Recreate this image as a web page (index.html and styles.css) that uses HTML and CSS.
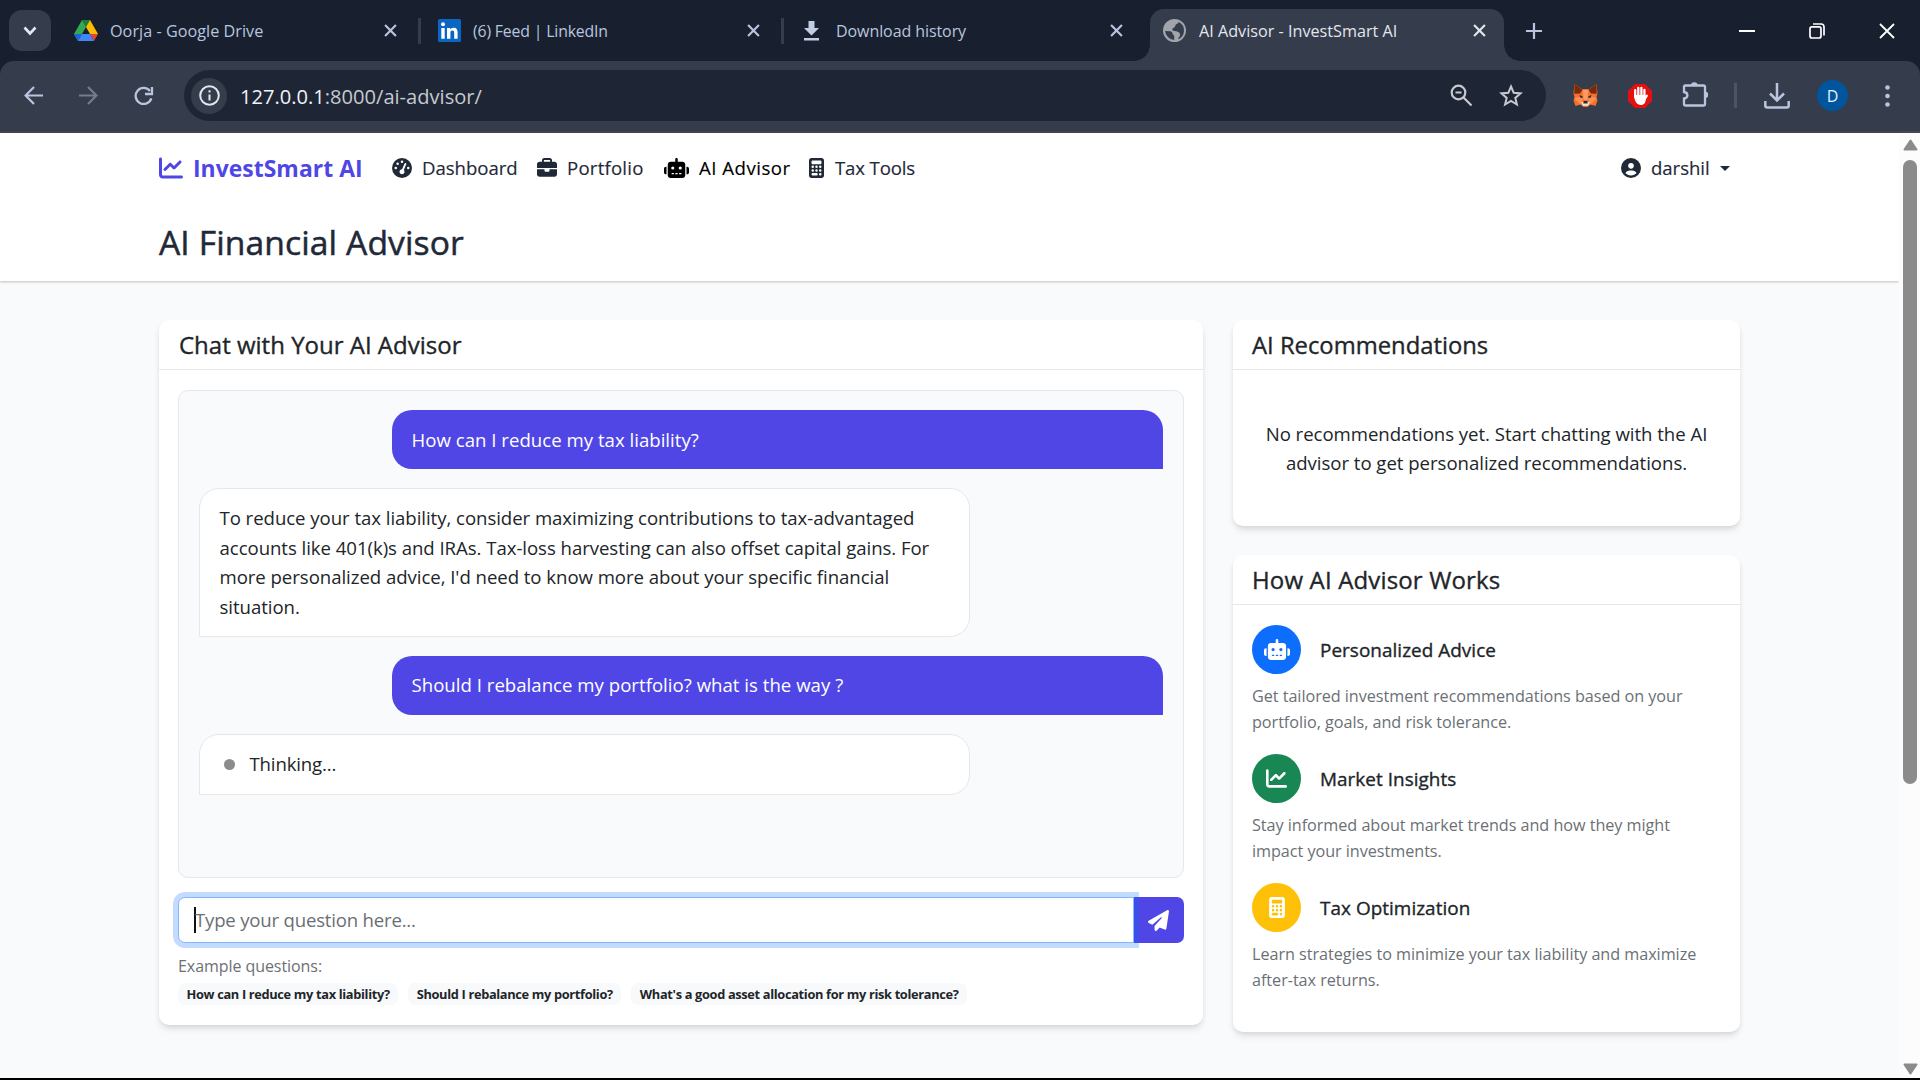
FILE: index.html
```html
<!DOCTYPE html>
<html lang="en">
<head>
<meta charset="utf-8">
<title>AI Advisor - InvestSmart AI</title>
<link rel="stylesheet" href="styles.css">
</head>
<body>
<svg class="defs" width="0" height="0" aria-hidden="true">
  <symbol id="chart-line" viewBox="0 0 512 512"><path d="M64 64c0-17.7-14.3-32-32-32S0 46.3 0 64V400c0 44.2 35.8 80 80 80H480c17.7 0 32-14.3 32-32s-14.3-32-32-32H80c-8.8 0-16-7.2-16-16V64zm406.6 86.6c12.5-12.5 12.5-32.8 0-45.3s-32.8-12.5-45.3 0L320 210.7l-57.4-57.4c-12.5-12.5-32.8-12.5-45.3 0l-112 112c-12.5 12.5-12.5 32.8 0 45.3s32.8 12.5 45.3 0L240 221.3l57.4 57.4c12.5 12.5 32.8 12.5 45.3 0l128-128z"/></symbol>
  <symbol id="gauge" viewBox="0 0 512 512"><path fill-rule="evenodd" d="M0 256a256 256 0 1 1 512 0A256 256 0 1 1 0 256zM288 96a32 32 0 1 0-64 0 32 32 0 1 0 64 0zM256 416c35.3 0 64-28.7 64-64 0-17.4-6.9-33.1-18.1-44.6L366 161.7c5.3-12.1-.2-26.3-12.3-31.6s-26.3 .2-31.6 12.3L257.9 288c-.6 0-1.3 0-1.9 0-35.3 0-64 28.7-64 64s28.7 64 64 64zM176 144a32 32 0 1 0-64 0 32 32 0 1 0 64 0zM96 288a32 32 0 1 0 0-64 32 32 0 1 0 0 64zM448 256a32 32 0 1 0-64 0 32 32 0 1 0 64 0z"/></symbol>
  <symbol id="briefcase" viewBox="0 0 512 512"><path d="M184 48H328c4.4 0 8 3.6 8 8V96H176V56c0-4.4 3.6-8 8-8zm-56 8V96H64C28.7 96 0 124.7 0 160v96H192 320 512V160c0-35.3-28.7-64-64-64H384V56c0-30.9-25.1-56-56-56H184c-30.9 0-56 25.1-56 56zM512 288H320v32c0 17.7-14.3 32-32 32H224c-17.7 0-32-14.3-32-32V288H0V416c0 35.3 28.7 64 64 64H448c35.3 0 64-28.7 64-64V288z"/></symbol>
  <symbol id="robot" viewBox="0 0 640 512"><path d="M320 0c17.7 0 32 14.3 32 32V96H472c39.8 0 72 32.2 72 72V440c0 39.8-32.2 72-72 72H168c-39.8 0-72-32.2-72-72V168c0-39.8 32.2-72 72-72H288V32c0-17.7 14.3-32 32-32zM208 384c-8.8 0-16 7.2-16 16s7.2 16 16 16h32c8.8 0 16-7.2 16-16s-7.2-16-16-16H208zm96 0c-8.8 0-16 7.2-16 16s7.2 16 16 16h32c8.8 0 16-7.2 16-16s-7.2-16-16-16H304zm96 0c-8.8 0-16 7.2-16 16s7.2 16 16 16h32c8.8 0 16-7.2 16-16s-7.2-16-16-16H400zM264 256a40 40 0 1 0-80 0 40 40 0 1 0 80 0zm152 40a40 40 0 1 0 0-80 40 40 0 1 0 0 80zM48 224H64V416H48c-26.5 0-48-21.5-48-48V272c0-26.5 21.5-48 48-48zm544 0c26.5 0 48 21.5 48 48v96c0 26.5-21.5 48-48 48H576V224h16z"/></symbol>
  <symbol id="calculator" viewBox="0 0 384 512"><path d="M64 0C28.7 0 0 28.7 0 64V448c0 35.3 28.7 64 64 64H320c35.3 0 64-28.7 64-64V64c0-35.3-28.7-64-64-64H64zM96 64H288c17.7 0 32 14.3 32 32v32c0 17.7-14.3 32-32 32H96c-17.7 0-32-14.3-32-32V96c0-17.7 14.3-32 32-32zm32 160a32 32 0 1 1-64 0 32 32 0 1 1 64 0zM96 352a32 32 0 1 1 0-64 32 32 0 1 1 0 64zM64 416c0-17.7 14.3-32 32-32h96c17.7 0 32 14.3 32 32s-14.3 32-32 32H96c-17.7 0-32-14.3-32-32zM192 256a32 32 0 1 1 0-64 32 32 0 1 1 0 64zm32 64a32 32 0 1 1-64 0 32 32 0 1 1 64 0zm64-64a32 32 0 1 1 0-64 32 32 0 1 1 0 64zm32 64a32 32 0 1 1-64 0 32 32 0 1 1 64 0zM288 448a32 32 0 1 1 0-64 32 32 0 1 1 0 64z"/></symbol>
  <symbol id="close" viewBox="0 0 12 12"><path d="M1 1l10 10M11 1L1 11" fill="none" stroke="currentColor" stroke-width="2"/></symbol>
</svg>

<div class="browser">
  <div class="tabstrip">
    <div class="tab-search"><svg width="14" height="10" viewBox="0 0 14 10"><path d="M1.5 1.5L7 7.5l5.5-6" fill="none" stroke="#e3e8f2" stroke-width="2.6"/></svg></div>
    <div class="tab tab-drive">
      <svg class="fav" width="24" height="22" viewBox="0 0 24 22"><path d="M8 0h8l-4 7z" fill="#188038"/><path d="M8 0l4 7-8 14L0 14z" fill="#34a853"/><path d="M16 0l8 14h-8L12 7z" fill="#fbbc04"/><path d="M16 14h8l-4 7z" fill="#ea4335"/><path d="M8 14h8l4 7H4z" fill="#4285f4"/><path d="M0 14h8l-4 7z" fill="#1967d2"/></svg>
      <span class="t-drive">Oorja - Google Drive</span><svg class="x" width="13" height="13"><use href="#close"/></svg>
    </div>
    <div class="tab tab-linked">
      <svg class="fav" width="23" height="23" viewBox="0 0 23 23"><rect width="23" height="23" rx="1.5" fill="#0a66c2"/><circle cx="5" cy="5.3" r="2" fill="#fff"/><path d="M3.3 9h3.4v10.7H3.3zM9 9h3.2v1.5c.6-1.1 1.8-1.8 3.4-1.8 3.2 0 4 2.1 4 5v6h-3.4v-5.4c0-1.4-.2-2.7-1.8-2.7s-2 1.2-2 2.6v5.5H9z" fill="#fff"/></svg>
      <span class="t-linked">(6) Feed | LinkedIn</span><svg class="x" width="13" height="13"><use href="#close"/></svg>
    </div>
    <div class="tab tab-down">
      <svg class="fav" width="15" height="20" viewBox="0 0 15 20"><path d="M4.5 0h6v7H15l-7.5 7.5L0 7h4.5zM0 17h15v2.4H0z" fill="#c2cde4"/></svg>
      <span class="t-down">Download history</span><svg class="x" width="13" height="13"><use href="#close"/></svg>
    </div>
    <div class="tab tab-active">
      <svg class="fav" width="23" height="23" viewBox="0 0 24 24"><path fill="#a1a5ab" d="M12 0a12 12 0 1 0 0 24 12 12 0 0 0 0-24zM2.200 12.600l5 .2c2 .1 2.600 1.200 2.800 2.700.1 1.200 1.500 1 1.700 2.200.2 1.300-.5 2.600.3 4.100A9.800 9.800 0 0 1 2.200 12.600zm13.500 8.500c.2-2.500 2-2.400 2.200-4.500.2-2.300-1.900-3.200-4.200-3.700-2.200-.5-4-.6-4-2.200s1.800-1.300 2.700-2.600c.8-1.200.2-2.300 1.800-2.900 1-.4 1.900-.9 1.900-2.100a9.800 9.800 0 0 1 5.800 9.400 9.700 9.700 0 0 1-6.200 8.600z" fill-rule="evenodd"/></svg>
      <span class="t-active">AI Advisor - InvestSmart AI</span><svg class="x" width="13" height="13"><use href="#close"/></svg>
    </div>
    <svg class="newtab" width="16" height="16" viewBox="0 0 16 16"><path d="M8 0v16M0 8h16" stroke="#b9c5de" stroke-width="2.2"/></svg>
    <div class="winctl">
      <svg width="16" height="16" viewBox="0 0 16 16"><path d="M0 8h16" stroke="#fff" stroke-width="2"/></svg>
      <svg width="16" height="16" viewBox="0 0 16 16"><rect x="1" y="3.8" width="11" height="11.2" rx="2" fill="none" stroke="#fff" stroke-width="1.7"/><path d="M4 1h8a3 3 0 0 1 3 3v8.5" fill="none" stroke="#fff" stroke-width="1.7"/></svg>
      <svg width="16" height="16" viewBox="0 0 16 16"><path d="M1 1l14 14M15 1L1 15" stroke="#fff" stroke-width="1.8"/></svg>
    </div>
  </div>
  <div class="toolbar">
    <svg class="back" width="19" height="19" viewBox="0 0 19 19"><path d="M19 9.5H2M10 1L1.6 9.5 10 18" fill="none" stroke="#b9c5de" stroke-width="2.2"/></svg>
    <svg class="forward" width="19" height="19" viewBox="0 0 19 19"><path d="M0 9.5h17M9 1l8.4 8.5L9 18" fill="none" stroke="#757c8b" stroke-width="2.2"/></svg>
    <svg class="reload" width="20" height="20" viewBox="0 0 20 20"><path d="M17.3 12.3A8 8 0 1 1 16 5" fill="none" stroke="#b9c5de" stroke-width="2.3"/><path d="M18 1v7h-7" fill="none" stroke="#b9c5de" stroke-width="2.3"/></svg>
    <div class="omnibox">
      <div class="info"><svg width="21" height="21" viewBox="0 0 21 21"><circle cx="10.5" cy="10.5" r="9.3" fill="none" stroke="#e3e6ec" stroke-width="2"/><path d="M10.5 9.500v6M10.5 5.300v2.200" stroke="#e3e6ec" stroke-width="2"/></svg></div>
      <span class="url"><b>127.0.0.1</b>:8000/ai-advisor/</span>
      <svg class="zoomout" width="23" height="23" viewBox="0 0 23 23"><circle cx="8.5" cy="8.5" r="6.8" fill="none" stroke="#c7c9ce" stroke-width="2.2"/><path d="M13.5 13.5l8 8M5.5 8.5h6" stroke="#c7c9ce" stroke-width="2.2"/></svg>
      <svg class="star" width="24" height="23" viewBox="0 0 24 23"><path d="M12 2.5l2.7 6.3 6.8.6-5.2 4.5 1.6 6.6L12 17l-5.900 3.500 1.600-6.600-5.200-4.500 6.800-.6z" fill="none" stroke="#c7c9ce" stroke-width="2"/></svg>
    </div>
    <svg class="fox" width="25" height="23" viewBox="0 0 25 23"><path d="M1.5 0l8 5.500h6l8-5.500 1 9-1 4.500 1 3-2 5.500-5-1.500-3 2.500h-4L7.500 20.500l-5 1.500-2-5.500 1-3-1-4.500z" fill="#f5702b"/><path d="M1.500 0l8 5.800L7 9.500l-5.700.3zM23.500 0l-8 5.800L18 9.500l5.700.3z" fill="#7a2a0c"/><path d="M9.500 5.500h6L14.300 16h-3.600z" fill="#ff9a62"/><path d="M1 14l6-1.500 3 3-2.500 5zM24 14l-6-1.500-3 3 2.500 5z" fill="#ff8d52"/><path d="M6.500 11l3.500 1.500-1 1.500-2-.5zM18.500 11L15 12.500l1 1.500 2-.5z" fill="#2c3646"/><path d="M8 18h9l-1.800 3.800H9.800z" fill="#efe4dc"/><path d="M10.800 17h3.400l.6 2.500h-4.600z" fill="#262b33"/></svg>
    <svg class="block" width="24" height="24" viewBox="0 0 24 24"><path d="M7 0h10l7 7v10l-7 7H7l-7-7V7z" fill="#e60f0f"/><path d="M7.200 13V6.200M10.300 12V4M13.400 12V3.800M16.400 13V6" stroke="#fff" stroke-width="2.300" stroke-linecap="round"/><path d="M6.100 11h11.500v5c0 3-2 5-5 5-3.500 0-6.500-4-6.500-10z" fill="#fff"/><path d="M16.500 15.500l2.300-3.800" stroke="#fff" stroke-width="2.300" stroke-linecap="round"/></svg>
    <svg class="puzzle" width="26" height="26" viewBox="0 0 26 26"><path d="M3 4.500h21a0 0 0 0 1 0 0" fill="none"/><path d="M3.500 4.500H21.500A1.500 1.500 0 0 1 23 6v17a1.500 1.500 0 0 1-1.500 1.500h-18A1.500 1.500 0 0 1 2 23v-5.500c4.500-.5 4.500-6 0-6.500V6a1.500 1.500 0 0 1 1.500-1.500z" fill="none" stroke="#b9c5de" stroke-width="2.300"/><path d="M9 4.500a3.300 3.300 0 0 1 6.600 0zM23 10.500a3.300 3.300 0 0 1 0 6.600z" fill="#b9c5de"/></svg>
    <i class="bar"></i>
    <svg class="dl" width="26" height="26" viewBox="0 0 26 26"><path d="M13 0v17M6 10.500l7 7 7-7M1.300 18v4.500a2 2 0 0 0 2 2h19.400a2 2 0 0 0 2-2V18" fill="none" stroke="#b9c5de" stroke-width="2.500"/></svg>
    <span class="avatar">D</span>
    <svg class="dots" width="5" height="22" viewBox="0 0 5 22"><g fill="#b9c5de"><circle cx="2.500" cy="2.500" r="2.300"/><circle cx="2.500" cy="11" r="2.300"/><circle cx="2.500" cy="19.500" r="2.300"/></g></svg>
  </div>
</div>

<div class="viewport">
  <div class="page">
    <header class="head">
      <nav class="nav">
        <a class="brand"><svg width="24" height="24"><use href="#chart-line"/></svg><span>InvestSmart AI</span></a>
        <a class="link l-dash"><svg width="20" height="20"><use href="#gauge"/></svg><span>Dashboard</span></a>
        <a class="link l-port"><svg width="20" height="20"><use href="#briefcase"/></svg><span>Portfolio</span></a>
        <a class="link l-ai"><svg width="25" height="20"><use href="#robot"/></svg><span>AI Advisor</span></a>
        <a class="link l-tax"><svg width="15" height="20"><use href="#calculator"/></svg><span>Tax Tools</span></a>
        <a class="link user"><svg width="20" height="20" viewBox="0 0 512 512"><path d="M399 384.2C376.9 345.8 335.4 320 288 320H224c-47.4 0-88.9 25.8-111 64.2c35.2 39.2 86.2 63.8 143 63.8s107.8-24.7 143-63.8zM0 256a256 256 0 1 1 512 0A256 256 0 1 1 0 256zm256 16a72 72 0 1 0 0-144 72 72 0 1 0 0 144z"/></svg><span>darshil</span><i class="caret"></i></a>
      </nav>
      <h1>AI Financial Advisor</h1>
    </header>
    <main class="columns">
      <section class="card chat">
        <h2 class="h-chat">Chat with Your AI Advisor</h2>
        <div class="chat-body">
          <div class="messages">
            <div class="msg me">How can I reduce my tax liability?</div>
            <div class="msg bot">To reduce your tax liability, consider maximizing contributions to tax-advantaged<br>accounts like 401(k)s and IRAs. Tax-loss harvesting can also offset capital gains. For<br>more personalized advice, I'd need to know more about your specific financial<br>situation.</div>
            <div class="msg me">Should I rebalance my portfolio? what is the way ?</div>
            <div class="msg bot thinking"><i class="pulse"></i><span>Thinking...</span></div>
          </div>
          <div class="ask">
            <div class="field"><i class="cursor"></i><span>Type your question here...</span></div>
            <div class="send"><svg width="21" height="21" viewBox="0 0 512 512"><path fill="#fff" d="M498.1 5.6c10.1 7 15.4 19.1 13.5 31.2l-64 416c-1.5 9.7-7.4 18.2-16 23s-18.9 5.4-28 1.6L284 427.7l-68.5 74.1c-8.9 9.7-22.9 12.9-35.2 8.1S160 493.2 160 480V396.4c0-4 1.5-7.8 4.2-10.7L331.8 202.8c5.8-6.3 5.6-16-.4-22s-15.7-6.4-22-.7L106 360.8 17.7 316.6C7.1 311.3 .3 300.7 0 288.9s5.900-22.800 16.100-28.700l448-256c10.700-6.100 23.900-5.500 34 1.400z"/></svg></div>
          </div>
          <p class="hint">Example questions:</p>
          <div class="badges"><span>How can I reduce my tax liability?</span><span>Should I rebalance my portfolio?</span><span>What's a good asset allocation for my risk tolerance?</span></div>
        </div>
      </section>
      <aside class="side">
        <section class="card recs">
          <h2>AI Recommendations</h2>
          <p>No recommendations yet. Start chatting with the AI<br>advisor to get personalized recommendations.</p>
        </section>
        <section class="card works">
          <h2 class="h-works">How AI Advisor Works</h2>
          <div class="item"><div class="item-head"><span class="dot blue"><svg width="26" height="21"><use href="#robot"/></svg></span><h3>Personalized Advice</h3></div><p>Get tailored investment recommendations based on your<br>portfolio, goals, and risk tolerance.</p></div>
          <div class="item"><div class="item-head"><span class="dot green"><svg width="21" height="21"><use href="#chart-line"/></svg></span><h3>Market Insights</h3></div><p>Stay informed about market trends and how they might<br>impact your investments.</p></div>
          <div class="item"><div class="item-head"><span class="dot yellow"><svg width="16" height="21"><use href="#calculator"/></svg></span><h3>Tax Optimization</h3></div><p>Learn strategies to minimize your tax liability and maximize<br>after-tax returns.</p></div>
        </section>
      </aside>
    </main>
  </div>
  <div class="scrollbar">
    <svg width="15" height="12" viewBox="0 0 15 12"><path d="M7.500 1.500L13.500 10.500H1.500z" fill="#8b8b8b" stroke="#8b8b8b" stroke-width="2" stroke-linejoin="round"/></svg>
    <i class="thumb"></i>
    <svg width="15" height="12" viewBox="0 0 15 12"><path d="M7.500 10.500L13.500 1.500H1.500z" fill="#8b8b8b" stroke="#8b8b8b" stroke-width="2" stroke-linejoin="round"/></svg>
  </div>
</div>
</body>
</html>
```
FILE: styles.css
```css
* { box-sizing: border-box; }
body {
  margin: 0; width: 1920px; height: 1080px; overflow: hidden; background: #000;
  display: flex; flex-direction: column;
  font: 400 18.6px/29.4px "Open Sans", "Noto Sans", sans-serif;
  letter-spacing: -0.045px; color: #212529; white-space: nowrap;
}
h1, h2, h3, p { margin: 0; }
svg { display: block; flex: none; fill: currentColor; }
.defs { position: absolute; }

/* Browser window frame */
.browser { height: 133px; flex: none; background: #182030; letter-spacing: 0; }
.tabstrip { height: 61px; display: flex; align-items: center; color: #b9c5de; font-size: 16.2px; }
.tab-search {
  width: 42px; height: 41px; margin-left: 9px; border-radius: 13px; background: #353c4c;
  display: flex; align-items: center; justify-content: center;
}
.tab { height: 26px; display: flex; align-items: center; }
.tab span { padding-top: 2px; }
.tab .x { margin-left: auto; }
.tab-drive { width: 370px; padding-left: 23px; padding-right: 21px; border-right: 3px solid #353c4c; }
.tab-linked { width: 363px; padding-left: 17px; padding-right: 21px; border-right: 3px solid #353c4c; }
.tab-down { width: 366px; padding-left: 20px; padding-right: 27px; }
.t-drive { margin-left: 12px; letter-spacing: .03px; }
.t-linked { margin-left: 12px; font-size: 15.8px; letter-spacing: -.15px; }
.t-down { margin-left: 17px; font-size: 16px; letter-spacing: -.08px; }
.t-active { margin-left: 13px; color: #e3e6ec; }
.tab-active {
  position: relative; align-self: flex-end; width: 354px; height: 52px; padding: 0 18px 9px 13px;
  border-radius: 14px 14px 0 0; background: #353c4c; color: #e3e6ec;
}
.tab-active::before, .tab-active::after { content: ""; position: absolute; bottom: 0; width: 16px; height: 16px; }
.tab-active::before { left: -16px; background: radial-gradient(circle at 0 0, #182030 15.5px, #353c4c 16px); }
.tab-active::after { right: -16px; background: radial-gradient(circle at 100% 0, #182030 15.5px, #353c4c 16px); }
.newtab { margin-left: 22px; }
.winctl { display: flex; gap: 54px; margin-left: auto; padding-right: 25px; }
.toolbar {
  height: 72px; display: flex; align-items: center; padding-bottom: 1px;
  background: #353c4c; border-bottom: 2px solid #444651; border-radius: 14px 14px 0 0;
}
.back { margin-left: 24px; }
.forward { margin-left: 36px; }
.reload { margin-left: 36px; }
.omnibox {
  width: 1362px; height: 51px; margin-left: 30px; border-radius: 26px; background: #1e2636;
  display: flex; align-items: center; padding: 0 23px 0 7px;
}
.info { width: 36px; height: 36px; border-radius: 50%; background: #353c4c; display: flex; align-items: center; justify-content: center; }
.url { margin-left: 13px; padding-top: 2px; font-size: 20.1px; color: #c7c9ce; }
.url b { font-weight: 400; color: #f0f2f6; }
.zoomout { margin-left: auto; }
.star { margin-left: 26px; }
.fox { margin-left: 27px; }
.block { margin-left: 30px; }
.puzzle { margin-left: 30px; margin-top: -4px; }
.bar { width: 3px; height: 25px; margin-left: 26px; background: #4c5466; }
.dl { margin-left: 27px; }
.avatar { width: 31px; height: 31px; margin-left: 27px; border-radius: 50%; background: #00559c; color: #e8f1fb; font-size: 16px; line-height: 32px; text-align: center; }
.dots { margin-left: 37px; }

/* Page area with its scrollbar */
.viewport { display: flex; height: 945px; flex: none; }
.page { width: 1899px; background: #f9fafc; }
.scrollbar { width: 21px; padding: 6px 2px 3px 4px; background: #fcfcfc; display: flex; flex-direction: column; }
.thumb { width: 14px; height: 624px; margin: 9px 0 auto; border-radius: 7px; background: #8b8b8b; }

.head { height: 148px; padding: 0 159px; background: #fff; box-shadow: 0 1px 3px rgba(0,0,0,.14), 0 1px 2px rgba(0,0,0,.1); color: #1f2937; }
.nav { height: 70px; display: flex; align-items: center; }
.brand { display: flex; align-items: center; width: 233px; color: #4f46e5; font-weight: 700; font-size: 22.9px; letter-spacing: .04px; }
.brand span { margin-left: 10px; padding-top: 1px; }
.link { display: flex; align-items: center; }
.link span { margin-left: 10px; -webkit-text-stroke: .15px; }
.l-dash { width: 145px; letter-spacing: -.03px; }
.l-port { width: 127px; letter-spacing: .22px; }
.l-ai { width: 145px; color: #000; letter-spacing: .5px; }
.l-tax { letter-spacing: -.15px; }
.l-tax span { margin-left: 11px; }
.user { margin-left: auto; width: 119px; }
.caret { margin-left: 10px; border: 5.5px solid transparent; border-top-color: #1f2937; border-bottom: 0; }
h1 { height: 78px; line-height: 78px; font-weight: 500; font-size: 33.65px; letter-spacing: .1px; -webkit-text-stroke: .5px; }

.columns { display: flex; gap: 30px; align-items: flex-start; padding: 39px 159px 0; }
.card { background: #fff; border-radius: 10px; box-shadow: 0 5px 7px -1px rgba(0,0,0,.1), 0 2px 5px -1px rgba(0,0,0,.07); }
h2 { height: 50px; padding: 0 19px; border-bottom: 1px solid #e5e7eb; font-weight: 500; font-size: 23.8px; line-height: 50px; letter-spacing: 0; -webkit-text-stroke: .35px; }
.h-chat { font-size: 24px; padding-left: 20px; }
.h-works { font-size: 24px; letter-spacing: .15px; }
.chat { width: 1044px; height: 705px; }
.chat-body { padding: 20px 19px 0; }
.messages {
  height: 488px; padding: 19px 20px; border: 1px solid #e5e7eb; border-radius: 10px; background: #f9fafc;
  display: flex; flex-direction: column; gap: 19px;
}
.msg { width: 771px; padding: 14.7px 19.5px; border-radius: 20px; }
.me { align-self: flex-end; background: #4f46e5; color: #fff; border-bottom-right-radius: 0; letter-spacing: .02px; }
.bot { background: #fff; border: 1px solid #e5e7eb; border-bottom-left-radius: 0; }
.thinking { display: flex; align-items: center; height: 61px; letter-spacing: -.15px; }
.pulse { width: 11px; height: 11px; margin: 0 15px 0 4px; border-radius: 50%; background: #8b8c8d; }
.ask { display: flex; margin-top: 19px; height: 46px; }
.field {
  width: 956px; display: flex; align-items: center; padding-left: 15px; color: #6b6f74; letter-spacing: -.2px;
  position: relative; z-index: 0; border: 1px solid #86b7fe; border-radius: 7px 0 0 7px; background: #fff; box-shadow: 0 0 0 5px #c2dbfe;
}
.cursor { width: 2px; height: 26px; margin-right: -1px; background: #111; }
.send { width: 50px; display: flex; align-items: center; justify-content: center; position: relative; z-index: 1; background: linear-gradient(90deg, #3c50e9 5px, #4f46e5 5px); border-radius: 0 7px 7px 0; }
.send svg { margin-right: 2px; }
.hint { margin-top: 10px; line-height: 26px; font-size: 16px; letter-spacing: -.06px; color: #6b7075; }
.badges { display: flex; gap: 10px; margin-top: 4px; }
.badges span { height: 22px; padding: 0 8.5px; border-radius: 7px; background: #f8f9fa; font-weight: 700; font-size: 12.8px; line-height: 23px; letter-spacing: -.33px; }

.side { width: 507px; display: flex; flex-direction: column; gap: 29px; }
.recs { height: 206px; }
.recs p { padding-top: 49px; text-align: center; letter-spacing: -.03px; }
.works { height: 477px; }
.item { height: 129px; padding: 0 19px; }
.works h2 { margin-bottom: 20px; }
.item-head { display: flex; align-items: center; gap: 19px; }
.dot { width: 49px; height: 49px; border-radius: 50%; color: #fff; display: flex; align-items: center; justify-content: center; }
.blue { background: #0d6efd; }
.green { background: #198754; }
.yellow { background: #ffc107; }
h3 { padding-top: 1px; font-weight: 500; font-size: 18.9px; line-height: 29px; letter-spacing: .05px; -webkit-text-stroke: .35px; }
.item p { margin-top: 10px; font-size: 16.2px; line-height: 25.8px; letter-spacing: -.04px; color: #6b7075; }
```
